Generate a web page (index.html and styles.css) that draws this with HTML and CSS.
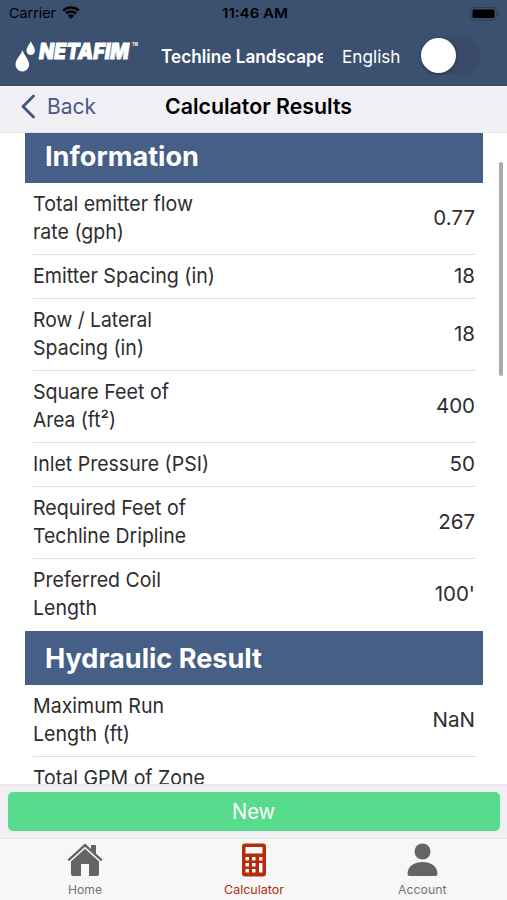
FILE: index.html
```html
<!DOCTYPE html>
<html lang="en">
<head>
<meta charset="utf-8">
<title>Calculator Results</title>
<link rel="stylesheet" href="styles.css">
</head>
<body>
<div class="app">
  <div class="status">
    <div class="carrier"><svg class="fit" width="43" height="16"><text x="0" y="13" textLength="47" lengthAdjust="spacingAndGlyphs">Carrier</text></svg>
      <svg class="wifi" width="18" height="13" viewBox="0 0 18 13"><path d="M1.2 4.6a11.4 11.4 0 0 1 15.6 0M4 7.5a7.4 7.4 0 0 1 10 0" fill="none" stroke="#000" stroke-width="2.4"/><path d="M9 12.8L5.9 9.7a4.6 4.6 0 0 1 6.2 0z"/></svg>
    </div>
    <svg class="fit clock" width="66" height="16"><text x="0" y="13" textLength="66" lengthAdjust="spacingAndGlyphs">11:46 AM</text></svg>
    <svg class="battery" width="30" height="14" viewBox="0 0 30 14"><rect x=".5" y=".5" width="26" height="12.5" rx="3.5" fill="none" stroke="#2d3c54"/><rect x="2.5" y="2.5" width="22" height="8.5" rx="1.5"/><path d="M28 5v4q1.5-.6 1.5-2T28 5" fill="#2d3c54"/></svg>
  </div>
  <header class="brandbar">
    <svg class="logo" width="126" height="36" viewBox="0 0 126 36"><path d="M7.500 13C6 18.500.5 22 .5 27.700a6.800 6.800 0 0 0 13.600 0C14.100 22 9 18.500 7.500 13zM15.800 4C15 7.300 11.500 9.500 11.500 13.700a4.200 4.200 0 0 0 8.400 0C19.900 9.500 16.700 7.300 15.800 4z" fill="#fff"/><text class="wordmark" x="24" y="21.500" textLength="90" lengthAdjust="spacingAndGlyphs">NETAFIM</text><text class="tm" x="117" y="9" textLength="6" lengthAdjust="spacingAndGlyphs">TM</text></svg>
    <svg class="fit product" width="162" height="28"><text x="0" y="19.500" textLength="166" lengthAdjust="spacingAndGlyphs">Techline Landscape</text></svg>
    <svg class="fit language" width="60" height="28"><text x="0" y="20" textLength="58.500" lengthAdjust="spacingAndGlyphs">English</text></svg>
    <div class="switch"><div class="knob"></div></div>
  </header>
  <nav class="titlebar">
    <svg class="chevron" width="15" height="25" viewBox="0 0 15 25"><path d="M13.500 2L3 12.500 13.500 23" fill="none" stroke="#3d5684" stroke-width="2.800" stroke-linecap="round" stroke-linejoin="round"/></svg>
    <svg class="fit back" width="54" height="30"><text x="0" y="21.500" textLength="49" lengthAdjust="spacingAndGlyphs">Back</text></svg>
    <svg class="fit heading" width="190" height="30"><text x="0" y="22" textLength="187" lengthAdjust="spacingAndGlyphs">Calculator Results</text></svg>
  </nav>
  <main class="content">
    <h2 class="section first"><svg class="fit" width="220" height="36"><text x="0" y="27.500" textLength="154" lengthAdjust="spacingAndGlyphs">Information</text></svg></h2>
    <div class="rows">
      <div class="row"><svg class="fit" width="200" height="56"><text x="0" y="21" textLength="160" lengthAdjust="spacingAndGlyphs">Total emitter flow</text><text x="0" y="49" textLength="91" lengthAdjust="spacingAndGlyphs">rate (gph)</text></svg><span>0.77</span></div>
      <div class="row"><svg class="fit" width="200" height="28"><text x="0" y="21" textLength="182" lengthAdjust="spacingAndGlyphs">Emitter Spacing (in)</text></svg><span>18</span></div>
      <div class="row"><svg class="fit" width="200" height="56"><text x="0" y="21" textLength="119" lengthAdjust="spacingAndGlyphs">Row / Lateral</text><text x="0" y="49" textLength="111" lengthAdjust="spacingAndGlyphs">Spacing (in)</text></svg><span>18</span></div>
      <div class="row"><svg class="fit" width="200" height="56"><text x="0" y="21" textLength="136" lengthAdjust="spacingAndGlyphs">Square Feet of</text><text x="0" y="49" textLength="83" lengthAdjust="spacingAndGlyphs">Area (ft²)</text></svg><span>400</span></div>
      <div class="row"><svg class="fit" width="200" height="28"><text x="0" y="21" textLength="176" lengthAdjust="spacingAndGlyphs">Inlet Pressure (PSI)</text></svg><span>50</span></div>
      <div class="row"><svg class="fit" width="200" height="56"><text x="0" y="21" textLength="153" lengthAdjust="spacingAndGlyphs">Required Feet of</text><text x="0" y="49" textLength="153" lengthAdjust="spacingAndGlyphs">Techline Dripline</text></svg><span>267</span></div>
      <div class="row last"><svg class="fit" width="200" height="56"><text x="0" y="21" textLength="128" lengthAdjust="spacingAndGlyphs">Preferred Coil</text><text x="0" y="49" textLength="64" lengthAdjust="spacingAndGlyphs">Length</text></svg><span>100'</span></div>
    </div>
    <h2 class="section"><svg class="fit" width="230" height="38"><text x="0" y="27.500" textLength="217" lengthAdjust="spacingAndGlyphs">Hydraulic Result</text></svg></h2>
    <div class="rows">
      <div class="row"><svg class="fit" width="200" height="56"><text x="0" y="21" textLength="131" lengthAdjust="spacingAndGlyphs">Maximum Run</text><text x="0" y="49" textLength="97" lengthAdjust="spacingAndGlyphs">Length (ft)</text></svg><span>NaN</span></div>
      <div class="row"><svg class="fit" width="200" height="56"><text x="0" y="21" textLength="172" lengthAdjust="spacingAndGlyphs">Total GPM of Zone</text></svg></div>
    </div>
    <div class="scrollbar"></div>
  </main>
  <div class="action"><button class="new"><svg class="fit" width="44" height="30"><text x="0" y="22" textLength="43" lengthAdjust="spacingAndGlyphs">New</text></svg></button></div>
  <footer class="tabs">
    <div class="tab"><svg width="36" height="34" viewBox="0 0 36 34"><path d="M18 .500l6 5.500V2h5v8.500l6.500 6-1.500 1.700L18 3.800 2 18.200.500 16.500zM18 5.800l14 12.700V31q0 2-2 2h-8V21h-8v12H6q-2 0-2-2V18.500z"/></svg><svg class="fit" width="36" height="16"><text x="1" y="12" textLength="34" lengthAdjust="spacingAndGlyphs">Home</text></svg></div>
    <div class="tab active"><svg width="36" height="34" viewBox="0 0 36 34"><path fill-rule="evenodd" d="M9 .500h18q3 0 3 3v27q0 3-3 3H9q-3 0-3-3v-27q0-3 3-3zM9.500 4v6.500h17V4zM9.500 14v3.500H13V14zm6.500 0v3.500h3.500V14zm7 0v3.500h3.500V14zM9.500 20v3.500H13V20zm6.500 0v3.500h3.500V20zm7 0v9.500h3.500V20zM9.500 26v3.500H13V26zm6.500 0v3.500h3.500V26z"/></svg><svg class="fit" width="62" height="16"><text x="1" y="12" textLength="60" lengthAdjust="spacingAndGlyphs">Calculator</text></svg></div>
    <div class="tab"><svg width="36" height="34" viewBox="0 0 36 34"><circle cx="17.500" cy="8.500" r="8"/><path d="M2.500 31c0-8 7-12 15-12s15 4 15 12q0 2-2 2h-26q-2 0-2-2z"/></svg><svg class="fit" width="50" height="16"><text x="0" y="12" textLength="48.500" lengthAdjust="spacingAndGlyphs">Account</text></svg></div>
  </footer>
</div>
</body>
</html>
```
FILE: styles.css
```css
* { box-sizing: border-box; }
body { margin: 0; background: #fff; color: #2d2d2f; font-family: Inter, "Liberation Sans", sans-serif; }
svg { display: block; flex: none; }
.app { width: 507px; height: 900px; display: flex; flex-direction: column; overflow: hidden; }
.status { height: 28px; display: grid; grid-template-columns: 1fr 66px 1fr; padding: 5px 7px 0 9px; background: #3c506f; font-size: 13.5px; }
.carrier { display: flex; gap: 10px; }
.fit { overflow: hidden; }
.carrier .fit { overflow: visible; }
.wifi { margin-top: 1px; }
.clock { font-weight: 600; }
.battery { justify-self: end; margin-top: 2px; }
.brandbar { height: 58px; display: flex; background: #3c506f; border-bottom: 1px solid #354966; padding: 9px 24px 0 15px; }
.brandbar text { fill: #fff; }
.wordmark { font: italic 900 22px Inter, sans-serif; stroke: #fff; stroke-width: .8px; }
.tm { font-size: 4.5px; font-weight: 700; }
.product { margin: 6px 0 0 20px; font-size: 18px; font-weight: 600; }
.language { margin: 6px 0 0 19px; font-size: 17.5px; }
.switch { width: 61px; height: 38px; margin-left: 18px; border-radius: 20px; background: #394a68; padding: 1px; }
.knob { width: 35px; height: 35px; border-radius: 50%; background: #fff; box-shadow: 0 1px 3px #24344d; }
.titlebar { height: 47px; background: #f0f0f5; border-top: 1px solid #fafafc; border-bottom: 1px solid #e5e5e8; display: flex; padding-left: 20px; }
.chevron { margin-top: 7px; }
.back { margin: 5px 0 0 12px; font-size: 21.5px; }
.back text { fill: #485a85; }
.heading { margin: 5px 0 0 64px; font-size: 21.5px; font-weight: 600; }
.heading text { fill: #000; }
.content { height: 651px; position: relative; overflow: hidden; padding: 0 24px 0 25px; }
.section { margin: 0; height: 54px; padding: 9px 0 0 20px; background: #465f87; font-size: 27px; font-weight: 700; }
.section.first { height: 50px; padding-top: 5px; }
.section text { fill: #fff; }
.rows { padding: 0 7px 0 8px; font-size: 20.5px; }
.rows text { fill: #2d2d2f; }
.row { display: flex; align-items: center; justify-content: space-between; padding: 7px 0 8px; border-bottom: 1px solid #dfdfe1; }
.row.last { border-bottom-color: transparent; }
.row span { line-height: 28px; margin-right: 1px; }
.scrollbar { position: absolute; right: 4px; top: 29px; width: 4px; height: 214px; border-radius: 2px; background: #a9a9a9; }
.action { height: 55px; background: #f0f0f4; border-top: 1px solid #e9e9ed; border-bottom: 1px solid #e5e5e7; padding: 7px 7px 0 8px; }
.new { width: 100%; height: 39px; border: 0; border-radius: 5px; background: #57dc8d; display: flex; align-items: center; justify-content: center; padding: 0; font-family: inherit; font-size: 21px; }
.new text { fill: #fff; }
.tabs { height: 61px; display: grid; grid-template-columns: repeat(3, 169px); background: #f7f7f8; font-size: 12px; }
.tab { display: flex; flex-direction: column; align-items: center; padding-top: 4px; gap: 5px; fill: #646464; }
.tab text { fill: #757575; }
.tab.active, .tab.active text { fill: #b52b0b; }
```
